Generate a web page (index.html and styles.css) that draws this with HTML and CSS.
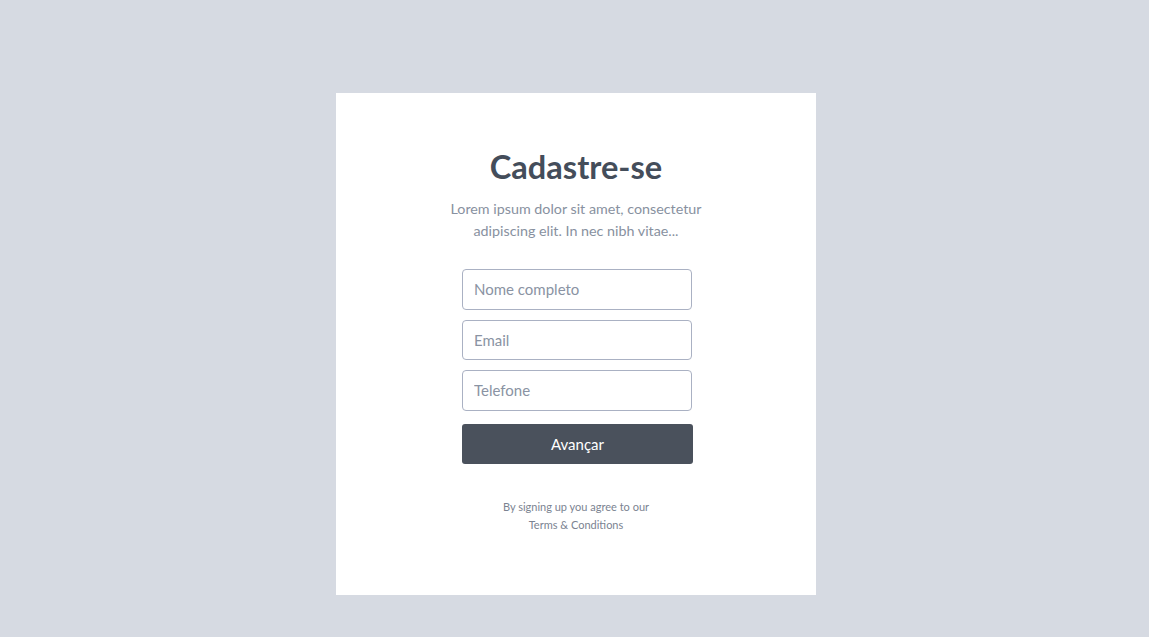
FILE: index.html
```html
<!DOCTYPE html>
<html lang="pt">
<head>
<meta charset="utf-8">
<title>Cadastre-se</title>
<link rel="stylesheet" href="styles.css">
</head>
<body>
<div class="page">
  <main class="card">
    <h1 class="title">Cadastre-se</h1>
    <p class="subtitle">Lorem ipsum dolor sit amet, consectetur<br>adipiscing elit. In nec nibh vitae...</p>
    <form class="form">
      <input class="field" type="text" placeholder="Nome completo">
      <input class="field" type="email" placeholder="Email">
      <input class="field" type="tel" placeholder="Telefone">
      <button class="btn" type="button">Avançar</button>
    </form>
    <p class="terms">By signing up you agree to our<br>Terms &amp; Conditions</p>
  </main>
</div>
</body>
</html>
```

FILE: styles.css
```css
html, body {
  margin: 0;
  padding: 0;
  height: 100%;
}
body {
  background: #d6dae2;
  font-family: Lato, "Open Sans", sans-serif;
}
.page {
  padding: 93px 0 0 336px;
}
.card {
  width: 480px;
  height: 502px;
  box-sizing: border-box;
  background: #ffffff;
  padding-top: 54px;
  display: flex;
  flex-direction: column;
  align-items: center;
}
.title {
  margin: 0;
  font-size: 32.6px;
  font-weight: 700;
  color: #444d5a;
  line-height: 40px;
}
.subtitle {
  margin: 11px 0 0;
  font-size: 14.3px;
  line-height: 22px;
  color: #8891a0;
  text-align: center;
}
.form {
  margin: 27px 0 0 2px;
  width: 230px;
  display: flex;
  flex-direction: column;
  gap: 10px;
}
.field {
  box-sizing: border-box;
  width: 230px;
  height: 40.5px;
  border: 1px solid #aab1c3;
  border-radius: 4px;
  padding: 0 11px;
  font-family: inherit;
  font-size: 15px;
  color: #444d5a;
  background: #fff;
  outline: none;
}
.field::placeholder {
  color: #8a93a3;
}
.btn {
  margin-top: 3px;
  height: 40px;
  width: 231px;
  border: none;
  border-radius: 3px;
  background: #4a515c;
  color: #ffffff;
  font-family: inherit;
  font-size: 15px;
}
.terms {
  margin: 34px 0 0;
  font-size: 11px;
  line-height: 18px;
  color: #7b8391;
  text-align: center;
}
```
